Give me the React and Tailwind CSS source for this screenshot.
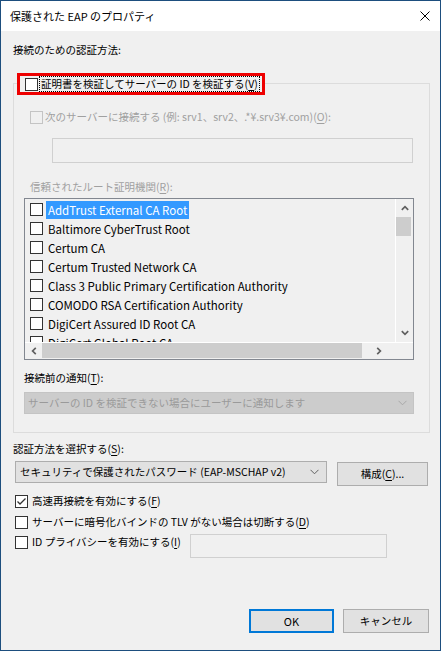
import React from "react";

function Box({ checked, disabled }) {
  return (
    <span
      className={
        disabled
          ? "w-[13px] h-[13px] shrink-0 border border-[#c4c4c4] bg-[#f0f0f0] flex items-center justify-center"
          : "w-[13px] h-[13px] shrink-0 border border-[#333333] bg-white flex items-center justify-center"
      }
    >
      {checked && (
        <svg width="11" height="11" viewBox="0 0 11 11">
          <polyline points="1.5,5.5 4,8 9.5,2.5" fill="none" stroke="#333" strokeWidth="1.3" />
        </svg>
      )}
    </span>
  );
}

function U({ children }) {
  return <span className="underline underline-offset-[2px] decoration-1">{children}</span>;
}

function ChevDown({ color = "#606060" }) {
  return (
    <svg width="9" height="6" viewBox="0 0 9 6">
      <path d="M0.5 0.8 L4.5 4.8 L8.5 0.8" fill="none" stroke={color} strokeWidth="1" />
    </svg>
  );
}

function ScrollArrow({ dir }) {
  if (dir === "left" || dir === "right") {
    const p = dir === "left" ? "M4.8 0.8 L1.6 4 L4.8 7.2" : "M1.2 0.8 L4.4 4 L1.2 7.2";
    return (
      <svg width="6" height="8" viewBox="0 0 6 8">
        <path d={p} fill="none" stroke="#606060" strokeWidth="1.7" />
      </svg>
    );
  }
  const d = dir === "up" ? "M0.8 4.8 L4 1.6 L7.2 4.8" : "M0.8 1.2 L4 4.4 L7.2 1.2";
  return (
    <svg width="8" height="6" viewBox="0 0 8 6">
      <path d={d} fill="none" stroke="#606060" strokeWidth="1.7" />
    </svg>
  );
}

const certs = [
  "AddTrust External CA Root",
  "Baltimore CyberTrust Root",
  "Certum CA",
  "Certum Trusted Network CA",
  "Class 3 Public Primary Certification Authority",
  "COMODO RSA Certification Authority",
  "DigiCert Assured ID Root CA",
  "DigiCert Global Root CA",
];

export default function App() {
  return (
    <div lang="ja" className="w-[441px] h-[651px] border border-[#1d4e7e] bg-[#f0f0f0] flex flex-col text-black text-[10.5px] font-['Noto_Sans_CJK_JP',sans-serif] font-features-['palt'] overflow-hidden">
      {/* title bar */}
      <div className="h-[30px] bg-white flex items-center pl-[9px] pr-[10px] shrink-0">
        <span className="leading-[16px] flex-1 text-[11px]">保護された EAP のプロパティ</span>
        <svg width="10" height="10" viewBox="0 0 10 10">
          <path d="M0.5 0.5 L9.5 9.5 M9.5 0.5 L0.5 9.5" stroke="#000" strokeWidth="1" />
        </svg>
      </div>

      {/* content */}
      <div className="flex-1 flex flex-col pl-[12px] pr-[10px] pt-[11px] pb-[17px]">
        <div className="leading-[16px] h-[16px]">接続のための認証方法:</div>

        {/* group box */}
        <div className="mt-[25px] border border-[#dcdcdc] flex flex-col pb-[18px]">
          <div className="-mt-[11px] ml-[3px] w-fit min-w-[243px] h-[22px] border-[3px] border-[#ee0000] bg-[#f0f0f0] flex items-center pl-[5px] pr-[2px]">
            <Box />
            <span className="ml-[1px] border border-dotted border-black px-[1px] leading-[14px] whitespace-nowrap">
              証明書を検証してサーバーの ID を検証する(<U>V</U>)
            </span>
          </div>

          <div className="mt-[14px] ml-[16px] h-[16px] flex items-center text-[#a0a0a0]">
            <Box disabled />
            <span className="ml-[2px] leading-[16px] whitespace-nowrap">
              次のサーバーに接続する (例: srv1、srv2、.*¥.srv3¥.com)(<U>O</U>):
            </span>
          </div>

          <div className="mt-[13px] ml-[38px] w-[361px] h-[25px] border border-[#d0d0d0] bg-[#f0f0f0]" />

          <div className="mt-[16px] ml-[16px] leading-[16px] h-[16px] text-[#a0a0a0]">
            信頼されたルート証明機関(<U>R</U>):
          </div>

          {/* list box */}
          <div className="mt-[3px] ml-[10px] w-[390px] h-[162px] border border-[#828790] bg-[#f0f0f0] flex flex-col">
            <div className="flex flex-1 min-h-0">
              <div className="flex-1 overflow-hidden pt-[1px] border-r border-white text-[11.5px]">
                {certs.map((c, i) => (
                  <div key={c} className="h-[19px] flex items-center pl-[5px] whitespace-nowrap">
                    <Box />
                    <span
                      className={
                        i === 0
                          ? "ml-[3px] px-[2px] h-[18px] flex items-center bg-[#3399ff] text-white leading-[16px]"
                          : "ml-[3px] px-[2px] h-[18px] flex items-center leading-[16px]"
                      }
                    >
                      {c}
                    </span>
                  </div>
                ))}
              </div>
              <div className="w-[17px] flex flex-col">
                <div className="h-[18px] flex items-center justify-center">
                  <ScrollArrow dir="up" />
                </div>
                <div className="h-[19px] w-[15px] bg-[#cdcdcd]" />
                <div className="flex-1" />
                <div className="h-[18px] flex items-center justify-center">
                  <ScrollArrow dir="down" />
                </div>
              </div>
            </div>
            <div className="h-[17px] flex shrink-0 border-t border-white">
              <div className="w-[17px] flex items-center justify-center">
                <ScrollArrow dir="left" />
              </div>
              <div className="w-[320px] h-[15px] bg-[#cdcdcd]" />
              <div className="flex-1 flex items-center justify-center">
                <ScrollArrow dir="right" />
              </div>
              <div className="w-[17px]" />
            </div>
          </div>

          <div className="mt-[10px] ml-[10px] leading-[16px] h-[16px]">
            接続前の通知(<U>T</U>):
          </div>

          <div className="mt-[6px] ml-[10px] w-[390px] h-[22px] border border-[#c4c4c4] bg-[#cccccc] flex items-center pl-[3px] pr-[6px] text-[#9a9a9a]">
            <span className="flex-1 leading-[16px] whitespace-nowrap">
              サーバーの ID を検証できない場合にユーザーに通知します
            </span>
            <ChevDown color="#a8a8a8" />
          </div>
        </div>

        {/* bottom section */}
        <div className="mt-[8px] leading-[16px] h-[16px]">
          認証方法を選択する(<U>S</U>):
        </div>
        <div className="mt-[4px] flex items-start">
          <div className="ml-[2px] w-[312px] h-[22px] border border-[#adadad] bg-[#e1e1e1] flex items-center pl-[4px] pr-[7px]">
            <span className="flex-1 leading-[16px] whitespace-nowrap">
              セキュリティで保護されたパスワード (EAP-MSCHAP v2)
            </span>
            <ChevDown />
          </div>
          <div className="ml-[10px] mt-[1px] w-[91px] h-[24px] border border-[#adadad] bg-[#e1e1e1] flex items-center justify-center leading-[16px]">
            構成(<U>C</U>)...
          </div>
        </div>

        <div className="mt-[7px] ml-[2px] h-[16px] flex items-center">
          <Box checked />
          <span className="ml-[4px] leading-[16px]">
            高速再接続を有効にする(<U>F</U>)
          </span>
        </div>
        <div className="mt-[5px] ml-[2px] h-[16px] flex items-center">
          <Box />
          <span className="ml-[4px] leading-[16px] whitespace-nowrap">
            サーバーに暗号化バインドの TLV がない場合は切断する(<U>D</U>)
          </span>
        </div>
        <div className="mt-[3px] flex items-start">
          <div className="ml-[2px] mt-[1px] h-[16px] flex items-center w-[175px]">
            <Box />
            <span className="ml-[4px] leading-[16px] whitespace-nowrap">
              ID プライバシーを有効にする(<U>I</U>)
            </span>
          </div>
          <div className="mt-[1px] w-[197px] h-[24px] border border-[#d0d0d0] bg-[#f0f0f0]" />
        </div>

        <div className="mt-auto flex justify-end pr-[1px]">
          <div className="w-[85px] h-[24px] border-2 border-[#0078d7] bg-[#e1e1e1] flex items-center justify-center leading-[16px] text-[11px]">
            OK
          </div>
          <div className="ml-[9px] w-[86px] h-[24px] border border-[#adadad] bg-[#e1e1e1] flex items-center justify-center leading-[16px]">
            キャンセル
          </div>
        </div>
      </div>
    </div>
  );
}
